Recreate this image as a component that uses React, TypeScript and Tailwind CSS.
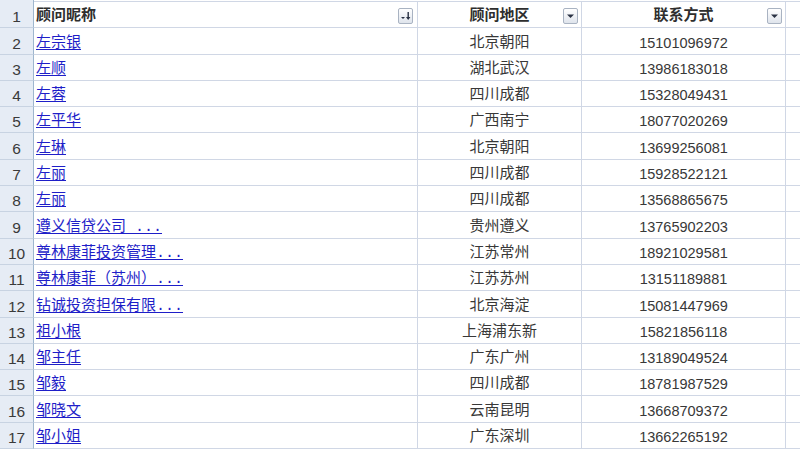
import React from "react";

const rows: [string, string, string][] = [
  ["左宗银", "北京朝阳", "15101096972"],
  ["左顺", "湖北武汉", "13986183018"],
  ["左蓉", "四川成都", "15328049431"],
  ["左平华", "广西南宁", "18077020269"],
  ["左琳", "北京朝阳", "13699256081"],
  ["左丽", "四川成都", "15928522121"],
  ["左丽", "四川成都", "13568865675"],
  ["遵义信贷公司 ...", "贵州遵义", "13765902203"],
  ["尊林康菲投资管理...", "江苏常州", "18921029581"],
  ["尊林康菲（苏州）...", "江苏苏州", "13151189881"],
  ["钻诚投资担保有限...", "北京海淀", "15081447969"],
  ["祖小根", "上海浦东新", "15821856118"],
  ["邹主任", "广东广州", "13189049524"],
  ["邹毅", "四川成都", "18781987529"],
  ["邹晓文", "云南昆明", "13668709372"],
  ["邹小姐", "广东深圳", "13662265192"],
];

const cjk = { fontFamily: "'Liberation Mono', 'Noto Sans CJK SC', sans-serif" };
const num = { fontFamily: "'Liberation Sans', 'Noto Sans CJK SC', sans-serif" };

function FilterBtn({ sort }: { sort?: boolean }) {
  return (
    <div className="absolute bottom-[3px] w-[15px] h-[16px] rounded-[2px] border border-[#a9b3c2] bg-gradient-to-b from-[#ffffff] to-[#dfe4ec] flex items-center justify-center">
      {sort ? (
        <svg width="11" height="10" viewBox="0 0 11 10">
          <path d="M1 6 L5 6 L3 8 Z" fill="#2a3244" />
          <rect x="7.5" y="1" width="1.4" height="6" fill="#2a3244" />
          <path d="M6 6 L10.4 6 L8.2 9 Z" fill="#2a3244" />
        </svg>
      ) : (
        <svg width="9" height="6" viewBox="0 0 9 6">
          <path d="M1 1.5 L8 1.5 L4.5 5 Z" fill="#2a3244" />
        </svg>
      )}
    </div>
  );
}

function RowHead({ n }: { n: number }) {
  return (
    <div
      className="h-full flex items-end justify-center pb-0 bg-[#e6ecf5] border-r border-r-[#9eb6ce] border-b border-b-[#c8d3e2] text-[15.5px] leading-[20px] text-[#3a3a3a]"
      style={num}
    >
      {n}
    </div>
  );
}

export default function App() {
  return (
    <div className="w-[800px] h-[455px] bg-white overflow-hidden flex flex-col">
      <div className="h-[2px] flex shrink-0">
        <div className="w-[34px] bg-[#e6ecf5] border-r border-r-[#9eb6ce]" />
        <div className="flex-1 border-b border-b-[#d0d7e5]" />
      </div>
      <div className="grid grid-cols-[34px_384px_164px_204px_1fr] auto-rows-[26.3px]">
        <RowHead n={1} />
        <div className="relative border-r border-b border-[#d0d7e5] flex items-end pl-[2px] pb-[1px] text-[15px] font-bold text-[#2e2e2e] leading-[18px]" style={cjk}>
          顾问昵称
          <div className="absolute right-[4px] bottom-0 h-full">
            <div className="relative h-full w-[15px]"><FilterBtn sort /></div>
          </div>
        </div>
        <div className="relative border-r border-b border-[#d0d7e5] flex items-end justify-center pb-[1px] text-[15px] font-bold text-[#2e2e2e] leading-[18px]" style={cjk}>
          顾问地区
          <div className="absolute right-[3px] bottom-0 h-full">
            <div className="relative h-full w-[15px]"><FilterBtn /></div>
          </div>
        </div>
        <div className="relative border-r border-b border-[#d0d7e5] flex items-end justify-center pb-[1px] text-[15px] font-bold text-[#2e2e2e] leading-[18px]" style={cjk}>
          联系方式
          <div className="absolute right-[3px] bottom-0 h-full">
            <div className="relative h-full w-[15px]"><FilterBtn /></div>
          </div>
        </div>
        <div className="border-b border-[#d0d7e5]" />
        {rows.map((r, i) => (
          <React.Fragment key={i}>
            <RowHead n={i + 2} />
            <div className="border-r border-b border-[#d0d7e5] flex items-end pl-[2px] pb-[1px] text-[15px] leading-[18px]" style={cjk}>
              <span className="text-[#1e1ec8] underline underline-offset-[2px] whitespace-pre">{r[0]}</span>
            </div>
            <div className="border-r border-b border-[#d0d7e5] flex items-end justify-center pb-[1px] text-[15px] leading-[18px] text-[#383838]" style={cjk}>
              {r[1]}
            </div>
            <div className="border-r border-b border-[#d0d7e5] flex items-end justify-center pb-[2px] text-[14.5px] leading-[17px] text-[#383838]" style={num}>
              {r[2]}
            </div>
            <div className="border-b border-[#d0d7e5]" />
          </React.Fragment>
        ))}
      </div>
    </div>
  );
}
